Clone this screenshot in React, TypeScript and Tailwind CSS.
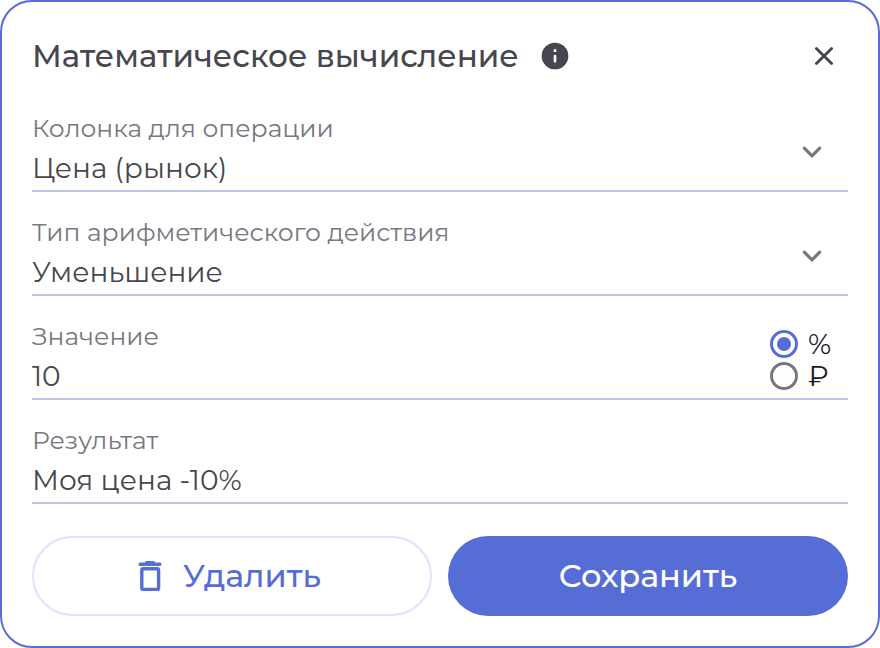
import React, { useState } from 'react'

const columns = ['Цена (рынок)', 'Цена (закупка)', 'Моя цена']
const actions = ['Уменьшение', 'Увеличение', 'Умножение', 'Деление']
const units = [
  { value: 'percent', sign: '%', name: 'Проценты' },
  { value: 'rub', sign: '₽', name: 'Рубли' },
]

const labelClass = 'block h-8 text-[25px] leading-8 text-[#787680]'
const controlClass = 'block h-12 w-full appearance-none rounded-none bg-transparent p-0 text-[28px] leading-10 text-[#47464f] outline-none'

function Field({ id, label, children }: { id: string; label: string; children: React.ReactNode }) {
  return (
    <div className="relative h-20 border-b-2 border-[#bac3ee]">
      <label htmlFor={id} className={labelClass}>{label}</label>
      {children}
    </div>
  )
}

function SelectField({ id, label, options }: { id: string; label: string; options: string[] }) {
  return (
    <Field id={id} label={label}>
      <select id={id} className={controlClass}>
        {options.map((option) => (
          <option key={option}>{option}</option>
        ))}
      </select>
      <svg className="pointer-events-none absolute top-6 right-5 size-8" viewBox="0 0 32 32" fill="none" aria-hidden="true">
        <path d="M8.3 12.2 16 19.8l7.7-7.6" stroke="#787680" strokeWidth="3.2" strokeLinecap="round" strokeLinejoin="round" />
      </svg>
    </Field>
  )
}

function TrashIcon() {
  return (
    <svg className="size-8" viewBox="0 0 32 32" aria-hidden="true">
      <path d="M10.2 1.8q.6-.8 1.6-.8h6.4q1 0 1.6.8l.3.7h5q1.4 0 1.4 1.7t-1.4 1.7H4.9q-1.4 0-1.4-1.7t1.4-1.7h5z" fill="currentColor" />
      <rect x="6.8" y="8.8" width="16.8" height="20.6" rx="1.4" fill="none" stroke="currentColor" strokeWidth="3.4" />
    </svg>
  )
}

export default function App() {
  const [unit, setUnit] = useState('percent')

  return (
    <form
      className="flex w-full flex-col gap-8 rounded-[32px] border-2 border-[#566dd6] bg-white p-[30px] font-['Montserrat','Inter',sans-serif]"
      onSubmit={(e) => e.preventDefault()}
    >
      <header className="flex h-12 items-center justify-between pr-2">
        <div className="flex items-center gap-5">
          <h1 className="text-[31px] leading-10 font-medium text-[#47464f]">Математическое вычисление</h1>
          <button type="button" aria-label="Справка" className="size-8 text-[#47464f]">
            <svg className="size-8" viewBox="0 0 24 24" fill="currentColor" aria-hidden="true">
              <path d="M12 2a10 10 0 1 0 0 20 10 10 0 0 0 0-20m0 15a1 1 0 0 1-1-1v-4a1 1 0 0 1 2 0v4a1 1 0 0 1-1 1m1-8h-2V7h2z" />
            </svg>
          </button>
        </div>
        <button type="button" aria-label="Закрыть" className="size-8 text-[#47464f]">
          <svg className="size-8" viewBox="0 0 32 32" fill="none" aria-hidden="true">
            <path d="M8.4 8.4l15.2 15.2M23.6 8.4 8.4 23.6" stroke="currentColor" strokeWidth="2.8" strokeLinecap="round" />
          </svg>
        </button>
      </header>

      <div className="flex flex-col gap-6">
        <SelectField id="column" label="Колонка для операции" options={columns} />
        <SelectField id="action" label="Тип арифметического действия" options={actions} />

        <div className="flex h-20 items-start border-b-2 border-[#bac3ee]">
          <div className="min-w-0 flex-1">
            <label htmlFor="amount" className={labelClass}>Значение</label>
            <input id="amount" type="text" inputMode="numeric" defaultValue="10" className={controlClass} />
          </div>
          <fieldset className="w-[78px] pt-2">
            {units.map((u) => (
              <label key={u.value} className="flex h-8 items-center gap-2.5 text-[28px] leading-8 text-[#1b1b1f]">
                <input
                  type="radio"
                  name="unit"
                  value={u.value}
                  aria-label={u.name}
                  checked={unit === u.value}
                  onChange={() => setUnit(u.value)}
                  className="size-7 shrink-0 appearance-none rounded-full border-3 border-[#787680] bg-clip-content p-1 checked:border-[#566dd6] checked:bg-[#566dd6]"
                />
                {u.sign}
              </label>
            ))}
          </fieldset>
        </div>

        <Field id="result" label="Результат">
          <input id="result" type="text" defaultValue="Моя цена -10%" className={controlClass} />
        </Field>
      </div>

      <div className="grid grid-cols-2 gap-4 text-[32px] leading-10 font-medium">
        <button type="button" className="flex h-20 items-center justify-center gap-4 rounded-full border-2 border-[#e0e0ff] pr-8 pl-6 text-[#566dd6]">
          <TrashIcon />
          Удалить
        </button>
        <button type="submit" className="h-20 rounded-full bg-[#566dd6] text-white">Сохранить</button>
      </div>
    </form>
  )
}
